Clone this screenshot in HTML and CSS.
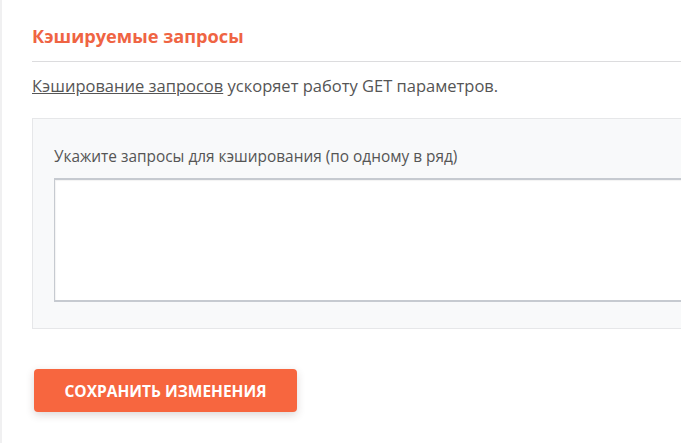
FILE: index.html
```html
<!DOCTYPE html>
<html lang="ru">
<head>
  <meta charset="UTF-8">
  <meta name="viewport" content="width=device-width, initial-scale=1.0">
  <title>Кэшируемые запросы</title>
  <link rel="stylesheet" href="styles.css">
</head>
<body>
  <div class="page">
    <h2 class="title">Кэшируемые запросы</h2>
    <p class="desc"><a href="#">Кэширование запросов</a> ускоряет работу GET параметров.</p>

    <div class="panel">
      <label for="queries" class="label">Укажите запросы для кэширования (по одному в ряд)</label>
      <textarea id="queries" name="queries"></textarea>
    </div>

    <button class="btn-save">Сохранить изменения</button>
  </div>
</body>
</html>
```

FILE: styles.css
```css
body {
  margin: 0;
  font-family: "Open Sans", "Noto Sans", sans-serif;
  background: #fff;
  overflow: hidden;
}

.page {
  width: 760px;
  min-height: 443px;
  box-sizing: border-box;
  border-left: 2px solid #f0f0f1;
  padding-left: 30px;
}

.title {
  margin: 0;
  padding: 24px 0 13px;
  font-size: 18.2px;
  line-height: 24px;
  font-weight: 700;
  color: #ef6443;
  border-bottom: 1px solid #dcdcde;
}

.desc {
  margin: 13px 0 21px;
  font-size: 16.5px;
  line-height: 22px;
  color: #555;
}
.desc a {
  color: #555;
  text-decoration: underline;
}

.panel {
  display: flex;
  flex-direction: column;
  gap: 11px;
  padding: 28px 0 26px 21px;
  background: #f8f9fa;
  border: 1px solid #e6e7e9;
}

.label {
  font-size: 15.4px;
  line-height: 20px;
  color: #555;
}

.panel textarea {
  height: 124px;
  box-sizing: border-box;
  border: 2px solid #c6cad0;
  border-left-width: 1px;
  border-right: none;
  background: #fff;
  resize: none;
  box-shadow: inset 1px 1px 1px rgba(0, 0, 0, 0.05);
}

.btn-save {
  display: block;
  margin: 40px 0 0 2px;
  width: 263px;
  height: 43px;
  border: none;
  border-radius: 4px;
  background: #f7663f;
  color: #fff;
  font-family: inherit;
  font-size: 15.5px;
  font-weight: 700;
  text-transform: uppercase;
  box-shadow: 0 3px 8px rgba(60, 40, 40, 0.18);
  cursor: pointer;
}
```
